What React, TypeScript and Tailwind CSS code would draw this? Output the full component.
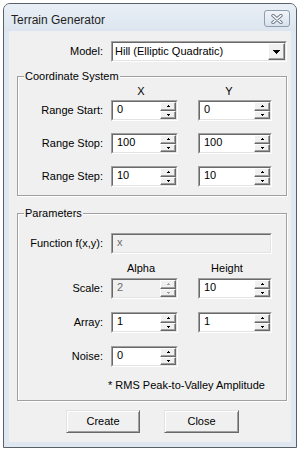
import React from "react";

function TriUp({ color = "#000" }: { color?: string }) {
  return (
    <svg width="5" height="3" viewBox="0 0 5 3" shapeRendering="crispEdges">
      <rect x="2" y="0" width="1" height="1" fill={color} />
      <rect x="1" y="1" width="3" height="1" fill={color} />
    </svg>
  );
}
function TriDown({ color = "#000" }: { color?: string }) {
  return (
    <svg width="5" height="3" viewBox="0 0 5 3" shapeRendering="crispEdges">
      <rect x="1" y="1" width="3" height="1" fill={color} />
      <rect x="2" y="2" width="1" height="1" fill={color} />
    </svg>
  );
}

function Sunken({
  children,
  className = "",
  disabled = false,
}: {
  children?: React.ReactNode;
  className?: string;
  disabled?: boolean;
}) {
  return (
    <div
      className={
        "h-[21px] border border-t-[#a0a0a0] border-l-[#a0a0a0] border-r-white border-b-white shrink-0 " +
        className
      }
    >
      <div
        className={
          "h-full flex border border-t-[#696969] border-l-[#696969] border-r-[#e3e3e3] border-b-[#e3e3e3] " +
          (disabled ? "bg-[#f0f0f0]" : "bg-white")
        }
      >
        {children}
      </div>
    </div>
  );
}

function SpinBtn({ up, disabled }: { up: boolean; disabled?: boolean }) {
  const c = disabled ? "#a0a0a0" : "#000";
  return (
    <div className="flex-1 flex items-center justify-center bg-[#f0f0f0] border border-t-white border-l-white border-r-[#696969] border-b-[#696969] shadow-[inset_-1px_-1px_0_#a0a0a0]">
      {up ? <TriUp color={c} /> : <TriDown color={c} />}
    </div>
  );
}

function Spin({
  value,
  width,
  disabled = false,
}: {
  value: string;
  width: string;
  disabled?: boolean;
}) {
  return (
    <Sunken className={width} disabled={disabled}>
      <div
        className={
          "flex-1 pl-[4px] pt-[1px] " + (disabled ? "text-[#6d6d6d]" : "text-black")
        }
      >
        {value}
      </div>
      <div className="w-[16px] flex flex-col">
        <SpinBtn up disabled={disabled} />
        <SpinBtn up={false} disabled={disabled} />
      </div>
    </Sunken>
  );
}

function Label({ children }: { children: React.ReactNode }) {
  return <div className="w-[93px] pr-[8px] text-right shrink-0">{children}</div>;
}

function Group({
  title,
  children,
  className = "",
}: {
  title: string;
  children: React.ReactNode;
  className?: string;
}) {
  return (
    <div
      className={
        "relative ml-[8px] w-[270px] border border-[#a0a0a0] shadow-[inset_1px_1px_0_#ffffff,1px_1px_0_#ffffff] " +
        className
      }
    >
      <div className="absolute left-[6px] -top-[7px] bg-[#f0f0f0] px-[1px]">{title}</div>
      {children}
    </div>
  );
}

function PushButton({ label, className = "" }: { label: string; className?: string }) {
  return (
    <div
      className={
        "h-[23px] flex items-center justify-center bg-[#f0f0f0] border border-t-[#e3e3e3] border-l-[#e3e3e3] border-r-[#696969] border-b-[#696969] shadow-[inset_1px_1px_0_#ffffff,inset_-1px_-1px_0_#a0a0a0] " +
        className
      }
    >
      {label}
    </div>
  );
}

export default function App() {
  return (
    <div className="w-[304px] h-[455px] bg-white font-['Liberation_Sans',Arial,sans-serif] text-[11px] leading-[13px] text-black pt-[3px] pl-[3px]">
      <div className="w-[294px] h-[445px] border border-[#5a6068] rounded-t-[7px] bg-[#dfe7f0] flex flex-col overflow-hidden">
        {/* Title bar */}
        <div className="h-[27px] shrink-0 flex items-start bg-gradient-to-b from-[#e9eff6] to-[#dce5ef]">
          <div className="flex-1 pl-[7px] pt-[9px] text-[12px] leading-[14px] text-[#1e1e1e]">
            Terrain Generator
          </div>
          <div className="mt-[6px] mr-[6px] w-[26px] h-[17px] rounded-[3px] border border-[#8e9db0] bg-gradient-to-b from-[#f2f5f9] to-[#d9e2ec] flex items-center justify-center">
            <svg width="12" height="10" viewBox="0 0 12 10">
              <path d="M2 1.5 L10 8.5 M10 1.5 L2 8.5" stroke="#6b7a8c" strokeWidth="3.4" strokeLinecap="round" />
              <path d="M2 1.5 L10 8.5 M10 1.5 L2 8.5" stroke="#ffffff" strokeWidth="1.6" strokeLinecap="round" />
            </svg>
          </div>
        </div>

        {/* Client */}
        <div className="mx-[5px] mb-[5px] flex-1 bg-[#f0f0f0] flex flex-col">
          {/* Model row */}
          <div className="mt-[10px] flex items-center">
            <div className="w-[102px] pr-[8px] text-right shrink-0">Model:</div>
            <Sunken className="w-[176px]">
              <div className="flex-1 flex items-center pl-[2px]">Hill (Elliptic Quadratic)</div>
              <div className="w-[17px] flex items-center justify-center bg-[#f0f0f0] border border-t-white border-l-white border-r-[#696969] border-b-[#696969] shadow-[inset_-1px_-1px_0_#a0a0a0]">
                <svg width="7" height="4" viewBox="0 0 7 4" shapeRendering="crispEdges">
                  <rect x="0" y="0" width="7" height="1" fill="#000" />
                  <rect x="1" y="1" width="5" height="1" fill="#000" />
                  <rect x="2" y="2" width="3" height="1" fill="#000" />
                  <rect x="3" y="3" width="1" height="1" fill="#000" />
                </svg>
              </div>
            </Sunken>
          </div>

          {/* Coordinate System */}
          <Group title="Coordinate System" className="mt-[14px] pt-[8px] pb-[8px]">
            <div className="flex h-[13px]">
              <div className="ml-[93px] w-[60px] text-center">X</div>
              <div className="ml-[27px] w-[62px] text-center">Y</div>
            </div>
            <div className="mt-[2px] flex flex-col gap-[12px]">
              <div className="flex items-center">
                <Label>Range Start:</Label>
                <Spin value="0" width="w-[67px]" />
                <div className="w-[20px]" />
                <Spin value="0" width="w-[74px]" />
              </div>
              <div className="flex items-center">
                <Label>Range Stop:</Label>
                <Spin value="100" width="w-[67px]" />
                <div className="w-[20px]" />
                <Spin value="100" width="w-[74px]" />
              </div>
              <div className="flex items-center">
                <Label>Range Step:</Label>
                <Spin value="10" width="w-[67px]" />
                <div className="w-[20px]" />
                <Spin value="10" width="w-[74px]" />
              </div>
            </div>
          </Group>

          {/* Parameters */}
          <Group title="Parameters" className="mt-[17px] pt-[19px] pb-[8px]">
            <div className="flex items-center">
              <Label>Function f(x,y):</Label>
              <Sunken className="w-[161px]" disabled>
                <div className="flex-1 pl-[4px] pt-[1px] text-[#6d6d6d]">x</div>
              </Sunken>
            </div>
            <div className="mt-[8px] flex h-[13px]">
              <div className="ml-[93px] w-[60px] text-center">Alpha</div>
              <div className="ml-[27px] w-[58px] text-center">Height</div>
            </div>
            <div className="mt-[3px] flex flex-col gap-[13px]">
              <div className="flex items-center">
                <Label>Scale:</Label>
                <Spin value="2" width="w-[67px]" disabled />
                <div className="w-[20px]" />
                <Spin value="10" width="w-[74px]" />
              </div>
              <div className="flex items-center">
                <Label>Array:</Label>
                <Spin value="1" width="w-[67px]" />
                <div className="w-[20px]" />
                <Spin value="1" width="w-[74px]" />
              </div>
              <div className="flex items-center">
                <Label>Noise:</Label>
                <Spin value="0" width="w-[67px]" />
              </div>
            </div>
            <div className="mt-[12px] ml-[90px]">* RMS Peak-to-Valley Amplitude</div>
          </Group>

          {/* Buttons */}
          <div className="mt-[9px] flex">
            <PushButton label="Create" className="ml-[57px] w-[74px]" />
            <PushButton label="Close" className="ml-[24px] w-[75px]" />
          </div>
        </div>
      </div>
    </div>
  );
}
